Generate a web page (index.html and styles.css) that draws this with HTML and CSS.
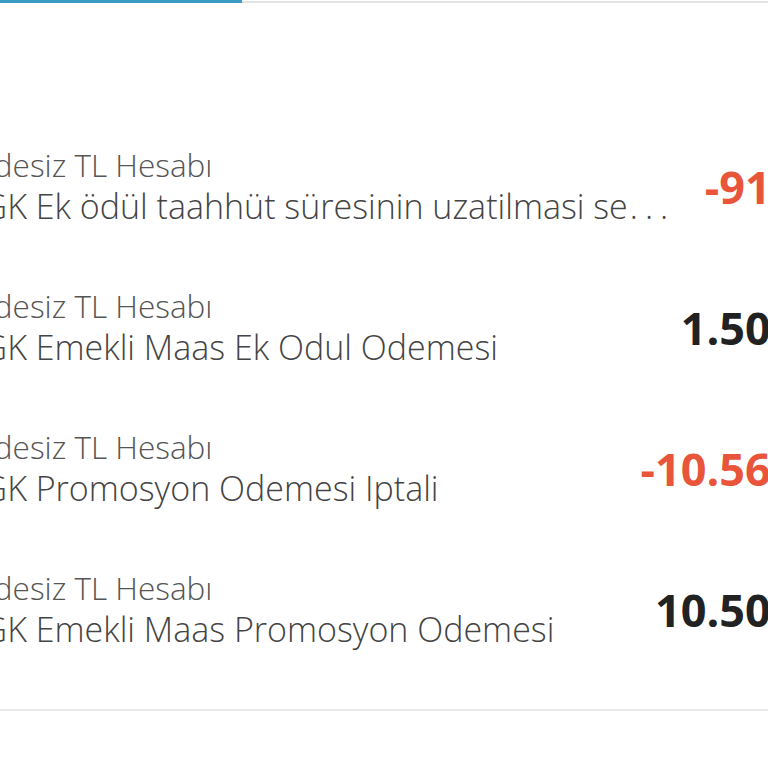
FILE: index.html
```html
<!DOCTYPE html>
<html lang="tr">
<head>
<meta charset="utf-8">
<link rel="stylesheet" href="styles.css">
</head>
<body>
<div class="viewport">
  <div class="tabs">
    <div class="tab-indicator"></div>
  </div>
  <div class="page">
    <ul class="tx-list">
      <li class="tx">
        <div class="tx-text">
          <div class="tx-account">Vadesiz TL Hesabı</div>
          <div class="tx-desc">SGK Ek ödül taahhüt süresinin uzatilmasi se<span class="ellipsis">...</span></div>
        </div>
        <div class="tx-amount neg">-916,67 TL</div>
      </li>
      <li class="tx">
        <div class="tx-text">
          <div class="tx-account">Vadesiz TL Hesabı</div>
          <div class="tx-desc">SGK Emekli Maas Ek Odul Odemesi</div>
        </div>
        <div class="tx-amount">1.500,00 TL</div>
      </li>
      <li class="tx">
        <div class="tx-text">
          <div class="tx-account">Vadesiz TL Hesabı</div>
          <div class="tx-desc">SGK Promosyon Odemesi Iptali</div>
        </div>
        <div class="tx-amount neg">-10.560,00 TL</div>
      </li>
      <li class="tx">
        <div class="tx-text">
          <div class="tx-account">Vadesiz TL Hesabı</div>
          <div class="tx-desc">SGK Emekli Maas Promosyon Odemesi</div>
        </div>
        <div class="tx-amount">10.500,00 TL</div>
      </li>
    </ul>
    <div class="divider"></div>
  </div>
</div>
</body>
</html>
```
FILE: styles.css
```css
html, body {
  margin: 0;
  padding: 0;
  background: #ffffff;
  overflow: hidden;
}
.viewport {
  width: 768px;
  height: 768px;
  overflow: hidden;
  font-family: "Open Sans", "Noto Sans", sans-serif;
}
.tabs {
  height: 3px;
  background: linear-gradient(#ffffff 0, #ffffff 1px, #e2e4e6 1px, #e2e4e6 3px);
  display: flex;
}
.tab-indicator {
  width: 242px;
  height: 3px;
  background: #3a9cc4;
}
.page {
  width: 1000px;
  margin-left: -41px;
}
.tx-list {
  list-style: none;
  margin: 0;
  padding: 113px 0 0 0;
}
.tx {
  height: 141px;
  display: flex;
  align-items: center;
  justify-content: space-between;
}
.tx-text {
  display: flex;
  flex-direction: column;
}
.tx-account {
  font-size: 31.5px;
  font-weight: 300;
  color: #555555;
  line-height: 39px;
}
.tx-desc {
  font-size: 34px;
  font-weight: 300;
  color: #444444;
  line-height: 45px;
  margin-left: 5px;
}
.ellipsis {
  letter-spacing: 7px;
  margin-left: 2px;
}
.tx-amount {
  font-size: 45px;
  font-weight: 700;
  color: #222222;
  padding-right: 35px;
}
.tx-amount.neg {
  color: #e8553a;
}
.divider {
  margin-top: 29px;
  margin-left: 41px;
  height: 2px;
  background: #e8e8e8;
}
```
